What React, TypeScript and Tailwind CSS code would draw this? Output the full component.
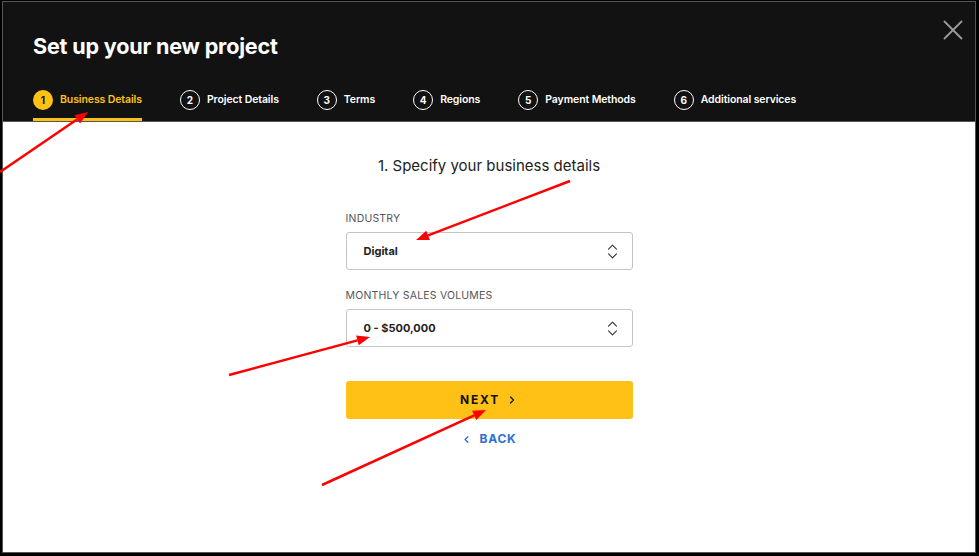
import React from 'react';
import { X, ChevronsUpDown, ChevronRight, ChevronLeft } from 'lucide-react';

const steps = [
  'Business Details',
  'Project Details',
  'Terms',
  'Regions',
  'Payment Methods',
  'Additional services',
];

function Arrow({ x1, y1, x2, y2 }: { x1: number; y1: number; x2: number; y2: number }) {
  const a = Math.atan2(y2 - y1, x2 - x1);
  const len = 13;
  const w = 5;
  const bx = x2 - len * Math.cos(a);
  const by = y2 - len * Math.sin(a);
  const p1 = `${bx + w * Math.sin(a)},${by - w * Math.cos(a)}`;
  const p2 = `${bx - w * Math.sin(a)},${by + w * Math.cos(a)}`;
  return (
    <g>
      <line x1={x1} y1={y1} x2={bx} y2={by} stroke="#ff0000" strokeWidth={2.5} />
      <polygon points={`${x2},${y2} ${p1} ${p2}`} fill="#ff0000" />
    </g>
  );
}

function Select({ label, value }: { label: string; value: string }) {
  return (
    <div className="flex flex-col">
      <span className="text-[10.5px] uppercase leading-[14px] tracking-[0.2px] text-[#555]">{label}</span>
      <div className="mt-[6px] flex h-[38px] items-center justify-between rounded-[3px] border border-[#c4c4c4] bg-white pl-[17px] pr-[10px]">
        <span className="text-[11px] font-bold text-[#222]">{value}</span>
        <ChevronsUpDown className="h-[19px] w-[19px] text-[#333]" strokeWidth={1.4} />
      </div>
    </div>
  );
}

export default function App() {
  return (
    <div
      className="relative h-[556px] w-[979px] bg-black pb-[3px] pl-[2px] pr-[3px] pt-[1px]"
      style={{ fontFamily: 'Inter, "Noto Sans", sans-serif' }}
    >
      <div className="flex h-full flex-col border border-[#555] bg-white">
        {/* Header */}
        <div className="relative border-b border-[#555] bg-[#121212] pl-[30px] pt-[30px]">
          <h1 className="text-[21.6px] font-bold leading-[28px] tracking-[-0.2px] text-white">
            Set up your new project
          </h1>
          <button className="absolute right-[5px] top-[11px] text-[#9a9a9a]">
            <X className="h-[34px] w-[34px]" strokeWidth={1.3} />
          </button>
          <div className="mt-[30px] flex gap-[38px]">
            {steps.map((s, i) => {
              const active = i === 0;
              return (
                <div
                  key={s}
                  className={[
                    'flex items-center gap-[7px] border-b-[3px] pb-[8px]',
                    active ? 'border-[#ffc115]' : 'border-transparent',
                  ].join(' ')}
                >
                  <span
                    className={[
                      'flex h-[20px] w-[20px] items-center justify-center rounded-full text-[10px] font-bold',
                      active ? 'bg-[#ffc115] text-[#121212]' : 'border border-white text-white',
                    ].join(' ')}
                  >
                    {i + 1}
                  </span>
                  <span
                    className={[
                      'text-[10.5px] font-semibold tracking-[-0.1px]',
                      active ? 'text-[#ffc115]' : 'text-white',
                    ].join(' ')}
                  >
                    {s}
                  </span>
                </div>
              );
            })}
          </div>
        </div>

        {/* Body */}
        <div className="flex flex-1 flex-col items-center pt-[34px]">
          <h2 className="text-[15px] leading-[20px] text-[#222]">1. Specify your business details</h2>
          <div className="mt-[36px] flex w-[287px] flex-col">
            <Select label="Industry" value="Digital" />
            <div className="mt-[19px]">
              <Select label="Monthly sales volumes" value="0 - $500,000" />
            </div>
            <button className="mt-[34px] flex h-[38px] items-center justify-center gap-[6px] rounded-[3px] bg-[#ffc115] text-[12px] font-bold tracking-[1.8px] text-[#111]">
              NEXT
              <ChevronRight className="h-[12px] w-[12px]" strokeWidth={2.5} />
            </button>
            <button className="mt-[11px] flex items-center justify-center gap-[7px] text-[12px] font-bold tracking-[0.8px] text-[#2f6fd4]">
              <ChevronLeft className="h-[11px] w-[11px]" strokeWidth={3} />
              BACK
            </button>
          </div>
        </div>
      </div>

      {/* annotation arrows */}
      <svg className="pointer-events-none absolute left-0 top-0" width={979} height={556}>
        <Arrow x1={0} y1={172} x2={88} y2={112} />
        <Arrow x1={570} y1={181} x2={416} y2={240} />
        <Arrow x1={229} y1={375} x2={370} y2={337} />
        <Arrow x1={322} y1={485} x2={486} y2={410} />
      </svg>
    </div>
  );
}
